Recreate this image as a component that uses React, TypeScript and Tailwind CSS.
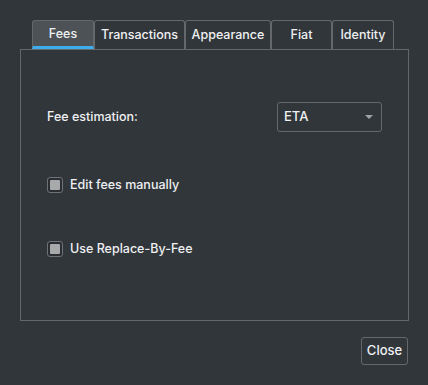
import { useState } from 'react';

const tabs = [
  { name: 'Fees', w: 'w-[62px]' },
  { name: 'Transactions', w: 'w-[91px]' },
  { name: 'Appearance', w: 'w-[86px]' },
  { name: 'Fiat', w: 'w-[61px]' },
  { name: 'Identity', w: 'w-[62px]' },
];

function Checkbox({ label }: { label: string }) {
  return (
    <label className="flex items-center gap-[7px]">
      <span className="flex h-[16px] w-[16px] items-center justify-center rounded-[3px] border border-[#6e7175] bg-[#2b2f33]">
        <span className="h-[10px] w-[10px] rounded-[1px] bg-[#a7a9ab]" />
      </span>
      <span>{label}</span>
    </label>
  );
}

export default function App() {
  const [active, setActive] = useState('Fees');

  return (
    <div className="h-[385px] w-[428px] bg-[#31363b] pt-[20px] text-[12.5px] font-medium text-[#eff0f1] [font-family:Inter,'Noto_Sans',sans-serif]">
      <div className="ml-[32px] flex">
        {tabs.map((t) => (
          <button
            key={t.name}
            onClick={() => setActive(t.name)}
            className={`${t.w} h-[29px] rounded-t-[3px] border border-b-0 border-[#65686b] pt-[1px] ${
              active === t.name ? 'border-b-[3px] border-b-[#3daee9] bg-[#4d5257]' : 'bg-[#31363b]'
            }`}
          >
            {t.name}
          </button>
        ))}
      </div>

      <div className="ml-[20px] h-[272px] w-[389px] border border-[#65686b] px-[26px] pt-[52px]">
        <div className="flex items-center justify-between">
          <span>Fee estimation:</span>
          <div className="flex h-[30px] w-[105px] items-center justify-between rounded-[3px] border border-[#65686b] pl-[6px] pr-[8px]">
            <span className="text-[13px]">ETA</span>
            <span className="h-0 w-0 border-x-[4px] border-t-[4px] border-x-transparent border-t-[#a0a2a4]" />
          </div>
        </div>
        <div className="mt-[44px]">
          <Checkbox label="Edit fees manually" />
        </div>
        <div className="mt-[45px]">
          <Checkbox label="Use Replace-By-Fee" />
        </div>
      </div>

      <div className="mt-[16px] flex justify-end pr-[20px]">
        <button className="h-[28px] w-[47px] rounded-[3px] border border-[#65686b] text-[13px]">Close</button>
      </div>
    </div>
  );
}
